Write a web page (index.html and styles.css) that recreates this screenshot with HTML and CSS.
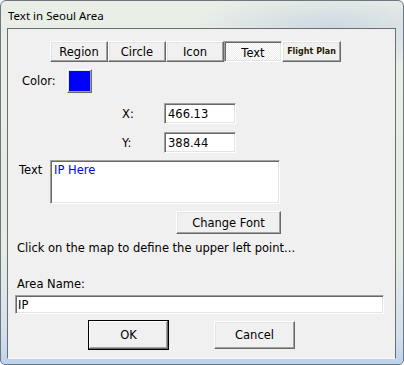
FILE: index.html
```html
<!DOCTYPE html>
<html lang="en">
<head>
    <meta charset="UTF-8">
    <link rel="stylesheet" href="styles.css">
    <title>Text in Seoul Area</title>
</head>
<body>
    <div class="window">
        <div class="titlebar">Text in Seoul Area</div>
        <div class="client">
            <div class="tabs">
                <button class="btn tab">Region</button>
                <button class="btn tab">Circle</button>
                <button class="btn tab">Icon</button>
                <button class="btn tab pressed">Text</button>
                <button class="btn tab small">Flight Plan</button>
            </div>

            <div class="color-row">
                <span class="color-label">Color:</span>
                <span class="btn swatch"></span>
            </div>

            <div class="coord-row first">
                <span class="coord-label">X:</span>
                <input class="field coord" type="text" value="466.13">
            </div>
            <div class="coord-row">
                <span class="coord-label">Y:</span>
                <input class="field coord" type="text" value="388.44">
            </div>

            <div class="text-row">
                <span class="text-label">Text</span>
                <textarea class="field text-box">IP Here</textarea>
            </div>

            <button class="btn change-font">Change Font</button>

            <div class="info">Click on the map to define the upper left point...</div>

            <div class="area-label">Area Name:</div>
            <input class="field area-input" type="text" value="IP">

            <div class="actions">
                <button class="btn action default">OK</button>
                <button class="btn action">Cancel</button>
            </div>
        </div>
    </div>
</body>
</html>
```

FILE: styles.css
```css
* {
    box-sizing: border-box;
}
body {
    margin: 0;
    width: 404px;
    height: 365px;
    overflow: hidden;
    font-family: 'DejaVu Sans', sans-serif;
    font-size: 11.5px;
    color: #000;
}
.window {
    width: 404px;
    height: 365px;
    border: 1px solid #6e7680;
    border-radius: 6px 6px 5px 5px;
    padding: 0 7px 6px 6px;
    background:
        radial-gradient(ellipse 140px 40px at 330px 30px, rgba(190, 205, 225, 0.7), transparent),
        linear-gradient(180deg, #e9efe7 0%, #e4ece4 70%, #d2e0ee 92%, #bcd2ec 100%);
}
.titlebar {
    height: 27px;
    padding: 7px 0 0 1px;
    font-family: 'Noto Sans', sans-serif;
    font-size: 11.5px;
    line-height: 16px;
    color: #000;
}
.client {
    height: 331px;
    background: #f0f0f0;
    border: 1px solid #6d6d6d;
    border-bottom-color: #f4f8fc;
}

/* boutons style classique */
.btn {
    font-family: 'DejaVu Sans', sans-serif;
    font-size: 11.5px;
    color: #000;
    background: #f0f0f0;
    border: 1px solid;
    border-color: #fff #696969 #696969 #fff;
    box-shadow: inset -1px -1px #a0a0a0, inset 1px 1px #e3e3e3;
    padding: 0;
}
.field {
    font-family: 'DejaVu Sans', sans-serif;
    font-size: 11.5px;
    color: #000;
    background: #fff;
    border: 1px solid;
    border-color: #a0a0a0 #fff #fff #a0a0a0;
    box-shadow: inset 1px 1px #696969, inset -1px -1px #e3e3e3;
    outline: none;
}

.tabs {
    display: flex;
    margin: 12px 0 0 42px;
    height: 21px;
}
.tab {
    width: 58px;
    height: 21px;
}
.tab.pressed {
    border-color: #a0a0a0 #fff #fff #a0a0a0;
    box-shadow: inset 1px 1px #696969, inset -1px -1px #e3e3e3;
    background: repeating-conic-gradient(#fff 0 25%, #ececec 0 50%) 0 0 / 2px 2px;
    padding-top: 2px;
}
.tab.small {
    width: 59px;
    font-size: 8px;
    font-weight: bold;
    color: #2a1a00;
}

.color-row {
    display: flex;
    align-items: center;
    margin-top: 7px;
    padding-left: 14px;
}
.color-label {
    width: 45px;
}
.swatch {
    display: block;
    width: 25px;
    height: 24px;
    background: #0000ff;
}

.coord-row {
    display: flex;
    align-items: center;
    margin-top: 8px;
    padding-left: 114px;
}
.coord-row.first {
    margin-top: 10px;
}
.coord-label {
    width: 42px;
}
.coord {
    width: 72px;
    height: 21px;
    padding: 0 3px;
}

.text-row {
    display: flex;
    align-items: flex-start;
    margin-top: 7px;
    padding-left: 11px;
}
.text-label {
    width: 31px;
    padding-top: 3px;
}
.text-box {
    width: 230px;
    height: 44px;
    resize: none;
    padding: 2px 3px;
    color: #0000ff;
    overflow: hidden;
}

.change-font {
    display: block;
    margin: 7px 0 0 168px;
    width: 105px;
    height: 23px;
}

.info {
    margin-top: 7px;
    padding-left: 9px;
    line-height: 14px;
}
.area-label {
    margin-top: 22px;
    padding-left: 9px;
    line-height: 14px;
}
.area-input {
    display: block;
    margin: 4px 0 0 7px;
    width: 369px;
    height: 19px;
    padding: 0 2px;
}

.actions {
    display: flex;
    align-items: center;
    margin: 6px 0 0 80px;
    gap: 45px;
}
.action {
    width: 81px;
    height: 28px;
}
.action.default {
    height: 30px;
    border: 1px solid #000;
    box-shadow: inset -1px -1px #696969, inset 1px 1px #fff, inset -2px -2px #a0a0a0;
}
```
